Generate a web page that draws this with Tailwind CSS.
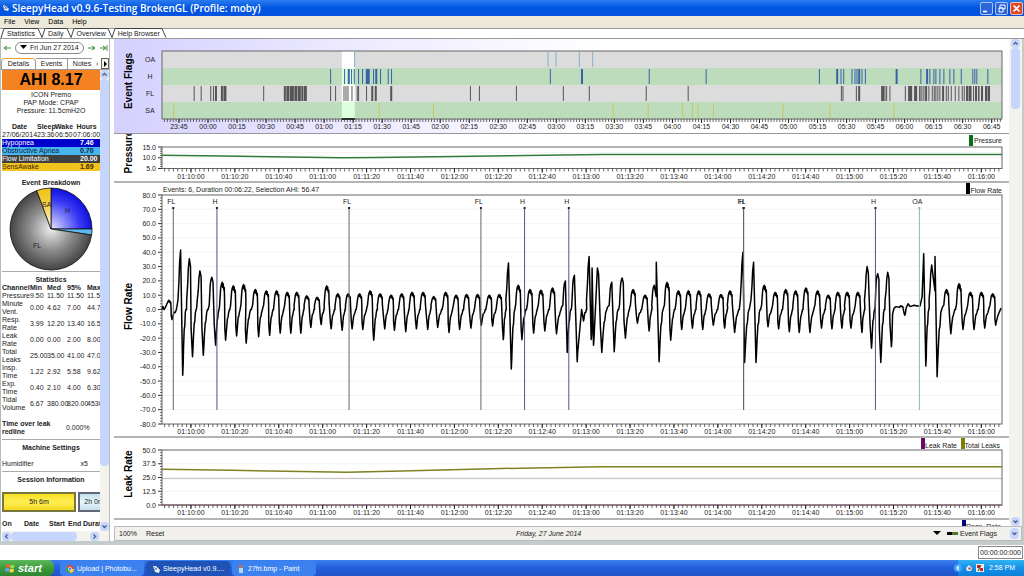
<!DOCTYPE html>
<html lang="en">

<head>
  <meta charset="UTF-8" />
  <meta name="viewport" content="width=device-width, initial-scale=1.0" />
  <title>SleepyHead v0.9.6-Testing BrokenGL (Profile: moby)</title>
  <script src="https://cdn.jsdelivr.net/npm/@tailwindcss/browser@4"></script>
</head>

<body class="flex h-screen flex-col overflow-hidden bg-white font-['Liberation_Sans',Arial,sans-serif] text-[7px] leading-[8px] text-[#222]">

  <!-- Title bar -->
  <header class="flex h-4 shrink-0 items-center bg-linear-to-b from-[#2a7cf0] via-[#0054e3] to-[#0553e0] pr-px pl-[2px] text-white">
    <svg class="h-2 w-2" viewBox="0 0 8 8"><path d="M1 1l3 1 3 3-1 2-4-1z" fill="#e8eef8" /><path d="M2 2l3 3M5 3L2 5" stroke="#567" stroke-width=".7" /></svg>
    <h1 class="ml-[2px] flex-1 truncate font-['Open_Sans',sans-serif] text-[10px] leading-[14px] font-semibold">SleepyHead v0.9.6-Testing BrokenGL (Profile: moby)</h1>
    <div class="flex gap-[2px]">
      <button aria-label="Minimize" class="h-[13px] w-[13px] rounded-[2px] border border-[#a9c4f5] bg-[#2f63d8]">
        <svg viewBox="0 0 11 11"><path d="M2 8.500h4" stroke="#fff" stroke-width="1.600" /></svg>
      </button>
      <button aria-label="Restore" class="h-[13px] w-[13px] rounded-[2px] border border-[#a9c4f5] bg-[#2f63d8]">
        <svg viewBox="0 0 11 11" fill="none" stroke="#fff"><path d="M4 4V2h5v4H7M3 5h4v4H3zM3 5h4" /></svg>
      </button>
      <button aria-label="Close" class="h-[13px] w-[13px] rounded-[2px] border border-[#f0c0b0] bg-[#dc4a26]">
        <svg viewBox="0 0 11 11"><path d="M2.500 2.500l6 6M8.500 2.500l-6 6" stroke="#fff" stroke-width="1.600" /></svg>
      </button>
    </div>
  </header>

  <!-- Menu -->
  <nav class="flex h-3 shrink-0 items-center gap-[9px] bg-[#ece9d8] px-1 text-black">
    <button>File</button>
    <button>View</button>
    <button>Data</button>
    <button>Help</button>
  </nav>

  <!-- Page tabs -->
  <div class="flex h-[11px] shrink-0 items-end border-t border-b border-[#999] bg-white text-[#222]">
    <svg class="h-[10px] w-[7px]" viewBox="0 0 7 10"><path d="M1 10L4 .500h3" fill="none" stroke="#444" /></svg>
    <button class="h-[10px] border-t border-[#444]">Statistics</button>
    <svg class="h-[10px] w-[13px]" viewBox="0 0 13 10"><path d="M0 .500h3l4 9 3-9h3" fill="none" stroke="#444" /></svg>
    <button class="h-[10px] border-t border-[#444]">Daily</button>
    <svg class="h-[10px] w-[13px]" viewBox="0 0 13 10"><path d="M0 .500h3l4 9 3-9h3" fill="none" stroke="#444" /></svg>
    <button class="h-[10px] border-t border-[#444]">Overview</button>
    <svg class="h-[10px] w-3" viewBox="0 0 12 10"><path d="M0 .500h2l4 9 3-9h3" fill="none" stroke="#444" /></svg>
    <button class="h-[10px] border-t border-[#444]">Help Browser</button>
    <svg class="h-[10px] w-[7px]" viewBox="0 0 7 10"><path d="M0 .500h2l4 9" fill="none" stroke="#444" /></svg>
  </div>

  <main class="flex min-h-0 flex-1 border-b-4 border-[#c3cccb]">

    <!-- Daily sidebar -->
    <aside class="flex w-[110px] shrink-0 flex-col border-x border-[#b4bcbc] bg-white">
      <div class="flex h-[17px] shrink-0 items-center gap-1 px-[2px]">
        <button aria-label="Previous day"><svg class="h-2 w-2" viewBox="0 0 8 8"><path d="M8 4H1M4 2L1 4l3 2" fill="none" stroke="#3c8a3c" /></svg></button>
        <button class="flex h-3 w-[70px] items-center gap-[3px] rounded-full border border-[#888] px-1 whitespace-nowrap"><svg class="h-[5px] w-[7px] shrink-0" viewBox="0 0 7 5"><path d="M0 0h7L3.500 4z" /></svg>Fri Jun 27 2014</button>
        <button aria-label="Next day"><svg class="h-2 w-2" viewBox="0 0 8 8"><path d="M0 4h7M4 2l3 2-3 2" fill="none" stroke="#3c8a3c" /></svg></button>
        <button aria-label="Latest day"><svg class="h-2 w-2" viewBox="0 0 8 8"><path d="M0 4h6M3 2l3 2-3 2M7 1v6" fill="none" stroke="#3c8a3c" /></svg></button>
      </div>
      <div class="flex h-[14px] shrink-0 items-stretch border-b border-[#999] pt-[2px]">
        <button class="w-[35px] rounded-t-sm border border-b-0 border-[#999] border-t-[#f0a020]">Details</button>
        <button class="w-8 border-t border-r border-[#999]">Events</button>
        <button class="w-6 border-t border-[#999] pl-1">Notes</button>
        <span class="flex flex-1 items-center justify-center"><svg class="h-1 w-1" viewBox="0 0 4 4"><path d="M3 0v4L1 2z" fill="#999" /></svg></span>
        <button aria-label="Scroll tabs" class="w-2 border border-[#666] bg-[#f4f2e8]"><svg class="h-2 w-[6px]" viewBox="0 0 6 8"><path d="M2 1l3 3-3 3z" /></svg></button>
      </div>

      <div class="flex min-h-0 flex-1">
        <div class="flex min-w-0 flex-1 flex-col overflow-hidden pl-px">
          <div class="min-h-0 flex-1 overflow-hidden">
            <h2 class="bg-[#f58220] text-center text-base leading-5 font-bold text-black">AHI 8.17</h2>
            <p class="pt-px text-center">ICON Premo<br>PAP Mode: CPAP<br>Pressure: 11.5cmH2O</p>

            <table class="mt-2 w-full table-fixed whitespace-nowrap">
              <thead>
                <tr><th class="w-[35px]">Date</th><th class="w-[18px]">Sleep</th><th class="w-[18px]">Wake</th><th>Hours</th></tr>
              </thead>
              <tbody>
                <tr><td>27/06/2014</td><td>23:36</td><td>06:50</td><td>07:06:00</td></tr>
              </tbody>
            </table>
            <table class="w-full">
              <tr class="bg-[#0000cc] text-white"><td>Hypopnea</td><td class="w-5 font-bold">7.46</td></tr>
              <tr class="bg-[#45b5ec] text-[#124]"><td>Obstructive Apnea</td><td class="font-bold">0.70</td></tr>
              <tr class="bg-[#404040] text-white"><td>Flow Limitation</td><td class="font-bold">20.00</td></tr>
              <tr class="bg-[#f0c41c] text-[#420]"><td>SensAwake</td><td class="font-bold">1.69</td></tr>
            </table>

            <h3 class="mt-2 text-center font-bold">Event Breakdown</h3>
            <svg class="mx-auto h-[84px] w-[96px]" viewBox="2 0 96 84" stroke="#111" stroke-width=".8">
              <defs>
                <radialGradient id="gH" gradientUnits="userSpaceOnUse" cx="50" cy="42" r="41"><stop stop-color="#e4e4ff" /><stop offset=".7" stop-color="#3a3af4" /><stop offset="1" stop-color="#1010e0" /></radialGradient>
                <radialGradient id="gF" gradientUnits="userSpaceOnUse" cx="50" cy="42" r="41"><stop stop-color="#eee" /><stop offset=".5" stop-color="#909090" /><stop offset="1" stop-color="#444" /></radialGradient>
                <radialGradient id="gS" gradientUnits="userSpaceOnUse" cx="50" cy="42" r="41"><stop stop-color="#fff" /><stop offset=".6" stop-color="#f2d040" /><stop offset="1" stop-color="#eec41c" /></radialGradient>
              </defs>
              <path d="M50 42V1A41 41 0 0 1 91 42z" fill="url(#gH)" />
              <path d="M50 42H91A41 41 0 0 1 90.600 48z" fill="#5cb8ee" />
              <path d="M50 42L90.600 48A41 41 0 1 1 35.700 3.600z" fill="url(#gF)" />
              <path d="M50 42L35.700 3.600A41 41 0 0 1 50 1z" fill="url(#gS)" />
              <g fill="#222" stroke="none" font-size="7"><text x="64" y="26">H</text><text x="32" y="61">FL</text><text x="41" y="20">SA</text></g>
            </svg>

            <h3 class="border-t border-[#aaa] pt-1 text-center font-bold">Statistics</h3>
            <table class="w-[106px] table-fixed text-left whitespace-nowrap">
              <thead>
                <tr><th class="w-[28px]">Channel</th><th class="w-[17px]">Min</th><th class="w-5">Med</th><th class="w-5">95%</th><th>Max</th></tr>
              </thead>
              <tbody>
                <tr><td>Pressure</td><td>9.50</td><td>11.50</td><td>11.50</td><td>11.50</td></tr>
                <tr><td>Minute<br>Vent.</td><td>0.00</td><td>4.62</td><td>7.00</td><td>44.75</td></tr>
                <tr><td>Resp.<br>Rate</td><td>3.99</td><td>12.20</td><td>13.40</td><td>16.58</td></tr>
                <tr><td>Leak<br>Rate</td><td>0.00</td><td>0.00</td><td>2.00</td><td>8.00</td></tr>
                <tr><td>Total<br>Leaks</td><td>25.00</td><td>35.00</td><td>41.00</td><td>47.00</td></tr>
                <tr><td>Insp.<br>Time</td><td>1.22</td><td>2.92</td><td>5.58</td><td>9.62</td></tr>
                <tr><td>Exp.<br>Time</td><td>0.40</td><td>2.10</td><td>4.00</td><td>6.30</td></tr>
                <tr><td>Tidal<br>Volume</td><td>6.67</td><td>380.00</td><td>820.00</td><td>4530</td></tr>
              </tbody>
            </table>

            <div class="mt-2 flex items-center pb-[3px]"><b class="w-16">Time over leak<br>redline</b><span>0.000%</span></div>
            <h3 class="border-t border-[#aaa] pt-1 text-center font-bold">Machine Settings</h3>
            <div class="mt-2 flex justify-between pr-3 pb-[3px]"><span>Humidifier</span><span>x5</span></div>
            <h3 class="border-t border-[#aaa] pt-1 text-center font-bold">Session Information</h3>
            <div class="mt-2 flex h-5 w-[120px] gap-[2px]">
              <button class="w-[74px] shrink-0 border-2 border-[#77763c] bg-linear-to-b from-[#f8e020] via-[#ffee50] to-[#f4d818]">5h 6m</button>
              <button class="w-8 border-2 border-[#667] bg-linear-to-b from-[#c2e0ee] via-[#e8f6fc] to-[#c2e0ee] whitespace-nowrap">2h 0m</button>
            </div>
            <div class="mt-2 flex w-[120px] font-bold whitespace-nowrap"><span class="w-[22px]">On</span><span class="w-[25px]">Date</span><span class="w-[19px]">Start</span><span class="w-[15px]">End</span><span>Duration</span></div>
          </div>
          <!-- horizontal scrollbar -->
          <div class="flex h-[10px] shrink-0 items-center bg-[#f3f2ec]">
            <button aria-label="Scroll left" class="h-[9px] w-[9px] rounded-sm bg-[#c5d5fc]"><svg viewBox="0 0 9 9"><path d="M5.500 2.500l-2 2 2 2" fill="none" stroke="#4d6185" stroke-width="1.300" /></svg></button>
            <span class="h-[9px] w-[66px] rounded-sm bg-[#c5d5fc]"></span>
            <span class="flex-1"></span>
            <button aria-label="Scroll right" class="mr-px h-[9px] w-[9px] rounded-sm bg-[#c5d5fc]"><svg viewBox="0 0 9 9"><path d="M3.500 2.500l2 2-2 2" fill="none" stroke="#4d6185" stroke-width="1.300" /></svg></button>
          </div>
        </div>
        <!-- vertical scrollbar -->
        <div class="flex w-[9px] shrink-0 flex-col bg-[#f3f2ec] pb-[10px]">
          <button aria-label="Scroll up" class="h-[9px] rounded-sm bg-[#c5d5fc]"><svg viewBox="0 0 9 9"><path d="M2.500 5.500l2-2 2 2" fill="none" stroke="#4d6185" stroke-width="1.300" /></svg></button>
          <span class="h-[84%] rounded-sm bg-[#c5d5fc]"></span>
          <span class="flex-1"></span>
          <button aria-label="Scroll down" class="h-[9px] rounded-sm bg-[#c5d5fc]"><svg viewBox="0 0 9 9"><path d="M2.500 3.500l2 2 2-2" fill="none" stroke="#4d6185" stroke-width="1.300" /></svg></button>
        </div>
      </div>
    </aside>

    <!-- Graphs -->
    <section class="ml-1 flex min-w-0 flex-1 flex-col">
      <div class="flex min-h-0 flex-1">
        <div class="flex min-w-0 flex-1 flex-col">
          <svg id="flags" class="block h-[95px] w-full shrink-0 border-b border-[#999] bg-linear-to-r from-[#d4d0ff] via-[#ece9ff] via-25% to-white to-55%"></svg>
          <svg id="pressure" class="block h-[49px] w-full shrink-0 border-b-2 border-[#b4b4b4]"></svg>
          <svg id="flow" class="block min-h-0 w-full flex-1 border-b-2 border-[#b4b4b4]"></svg>
          <svg id="leak" class="block h-[82px] w-full shrink-0 border-b-2 border-[#b4b4b4]"></svg>
          <svg id="resp" class="block h-[6px] w-full shrink-0"></svg>
        </div>
        <div class="flex w-[13px] shrink-0 flex-col bg-[#f3f2ec] px-[2px]">
          <button aria-label="Scroll up" class="h-[9px] rounded-sm bg-[#c5d5fc]"><svg viewBox="0 0 9 9"><path d="M2.500 5.500l2-2 2 2" fill="none" stroke="#4d6185" stroke-width="1.300" /></svg></button>
          <span class="h-[61px] rounded-sm bg-[#c5d5fc]"></span>
          <span class="flex-1"></span>
          <button aria-label="Scroll down" class="h-[9px] rounded-sm bg-[#c5d5fc]"><svg viewBox="0 0 9 9"><path d="M2.500 3.500l2 2 2-2" fill="none" stroke="#4d6185" stroke-width="1.300" /></svg></button>
        </div>
      </div>

      <div class="flex h-[15px] shrink-0 items-center border border-[#bbb] bg-[#f1f0ec] pl-1">
        <button class="w-[27px] text-left">100%</button>
        <button>Reset</button>
        <span class="flex-1 text-center italic">Friday, 27 June 2014</span>
        <svg class="mr-[6px] h-[5px] w-2" viewBox="0 0 8 5"><path d="M0 0h8L4 4z" /></svg>
        <svg class="mr-[2px] h-[3px] w-[11px]" viewBox="0 0 11 3"><path d="M0 0h5v3H0z" /><path d="M5 0h6v3H5z" fill="#4c7a2c" /></svg>
        <select aria-label="Graphs" class="w-[50px] appearance-none"><option>Event Flags</option></select>
        <span class="mr-[2px] h-[11px] w-[9px] rounded-sm bg-[#c5d5fc]"><svg viewBox="0 0 9 11"><path d="M2.500 4.500l2 2 2-2" fill="none" stroke="#4d6185" stroke-width="1.300" /></svg></span>
      </div>
    </section>
    <div class="w-[2px] bg-[#c3cccb]"></div>
  </main>

  <!-- Status bar -->
  <div class="flex h-[15px] shrink-0 justify-end bg-white pr-px">
    <input aria-label="Position" value="00:00:00:000" class="my-px w-[45px] border border-[#888] text-center text-[7px]" />
  </div>

  <!-- Taskbar -->
  <footer class="flex h-4 shrink-0 items-stretch bg-linear-to-b from-[#3a80f0] via-[#245edb] to-[#1f52c8] text-white">
    <button class="mr-[6px] flex w-[54px] items-center gap-[3px] rounded-r-md bg-linear-to-b from-[#5cb85c] via-[#3a9a3a] to-[#2f852f] pl-[5px] text-[11px] leading-3 font-bold italic">
      <svg class="h-[10px] w-[10px]" viewBox="0 0 10 10"><path d="M1 1.500q2-1 4 0L4.500 4.800q-2-1-4 0z" fill="#f0603a" /><path d="M5.600 1.800q2 .8 4 0L9 5q-2 .8-4 0z" fill="#a0d848" /><path d="M.4 5.400q2-1 4 0L4 8.700q-2-1-4 0z" fill="#68a0f8" /><path d="M5 5.700q2 .8 4 0L8.500 9q-2 .8-4 0z" fill="#fcd440" /></svg>start
    </button>
    <button class="mt-px mr-[2px] flex w-[84px] items-center gap-[3px] rounded-sm bg-[#3c81f0] pl-[6px]">
      <svg class="h-2 w-2" viewBox="0 0 8 8"><circle cx="4" cy="4" r="4" fill="#e0483c" /><path d="M4 4L.5 2A4 4 0 0 0 4 8z" fill="#3ca850" /><path d="M4 4h4a4 4 0 0 1-4 4z" fill="#f8cc30" /><circle cx="4" cy="4" r="1.700" fill="#4a88f0" stroke="#fff" stroke-width=".6" /></svg>Upload | Photobu...
    </button>
    <button class="mt-px mr-[2px] flex w-[84px] items-center gap-[3px] rounded-sm bg-[#1e52b7] pl-[6px]">
      <svg class="h-2 w-2" viewBox="0 0 8 8"><path d="M1 1l3 0 4 4-1 3-4-1z" fill="#e8eef8" /><path d="M2 2l3 3M5 3L2 5" stroke="#567" stroke-width=".7" /></svg>SleepyHead v0.9....
    </button>
    <button class="mt-px flex w-[84px] items-center gap-[3px] rounded-sm bg-[#3c81f0] pl-[5px]">
      <svg class="h-2 w-2" viewBox="0 0 8 8"><path d="M2 3h4v5H2z" fill="#b8d8f0" /><path d="M3 3L2 0M4 3V0M5 3l1-3" stroke="#e07030" /></svg>27fri.bmp - Paint
    </button>
    <span class="flex-1"></span>
    <div class="flex w-[66px] items-center gap-[3px] bg-linear-to-b from-[#30b4f4] via-[#1290e8] to-[#0f80d8]">
      <button aria-label="Show hidden icons" class="-ml-1 h-2 w-2 rounded-full bg-[#3ca4f8]"><svg viewBox="0 0 8 8"><path d="M5 2L3 4l2 2" fill="none" stroke="#fff" stroke-width="1.200" /></svg></button>
      <svg class="h-2 w-2" viewBox="0 0 8 8"><path d="M1 4l3-3 3 3-1 3H2z" fill="#e8eef8" /><circle cx="4.500" cy="4.500" r="1.200" fill="#c44" /></svg>
      <svg class="h-2 w-2" viewBox="0 0 8 8"><path d="M0 0h8v8H0z" fill="#eee" /><path d="M1 1h3v3H1zM4 4h3v3H4z" fill="#c22" /><path d="M5 1L2 7" stroke="#333" /></svg>
      <span class="ml-[2px]">2:58 PM</span>
    </div>
  </footer>

  <script>
    const LEFT = 48, RIGHT = 7, SPAN = 841; // plot margins, and the width the data is measured on

    // breaths: peak position, peak flow, trough position, trough flow
    const breaths = [
      [7, 6.5, 10, -7], [19, 41.5, 20.7, -46], [27.7, 35.5, 30.5, -33], [38.3, 27, 41.3, -32], [50.3, 22.5, 53.7, -25],
      [60.7, 19, 63.7, -21.5], [71.7, 16.5, 74.7, -18.5], [82, 17.5, 84.3, -23.5], [93.7, 14, 96.7, -19], [104.7, 13, 107.7, -18],
      [115, 13, 118.3, -16.5], [125.7, 12, 129, -16.5], [135.3, 12, 139, -16.5], [145.3, 9.5, 149, -12.5], [155.7, 8.5, 159.3, -10.5],
      [165.3, 16.5, 169.3, -13.5], [176.3, 11, 180.3, -14.5], [186.7, 11, 190.3, -13.5], [198, 11, 201, -14], [208.7, 13, 212, -21.5],
      [218.7, 11, 223, -13.5], [229.7, 10, 232.7, -14.5], [240.3, 11, 244, -15.5], [250.7, 12, 254.7, -13.5], [261.7, 12, 266, -14],
      [272.3, 9, 276, -12.5], [284.3, 12, 287.3, -16], [294.7, 10, 298, -14], [305.3, 10.5, 309.3, -13], [316.3, 10.5, 319.7, -11],
      [328, 10, 331, -11.5], [338, 10.5, 341.7, -21], [347.3, 32.5, 349.7, -41.5], [357, 17, 360.3, -21], [368.7, 14, 372, -16.5],
      [379.7, 13.5, 383.3, -15], [391.3, 15, 395, -17], [404.3, 20, 405.7, -30], [413.3, 24, 415.7, -36.5], [420.5, 0, 422, -8],
      [428, 37, 429.7, -21], [431, 29, 432, -25], [436.3, 29, 440.3, -30], [450.7, 19, 452.7, -29.5], [461, 22, 464, -20],
      [472, 14, 476, -9.5], [484, 10, 487.7, -15], [493.3, 17, 494.3, 11], [495.3, 33, 497.7, -36.5], [506, 19, 509.3, -21.5],
      [517.3, 13, 520.3, -14], [527.3, 13, 531, -13], [537.7, 13, 541.3, -14], [548, 11, 552, -11], [560, 10.5, 563.3, -13],
      [569, 13, 573.3, -16], [582, 40, 583.3, -37], [592.7, 33, 594.7, -37], [603.3, 17, 606.7, -12], [614.3, 12, 617.3, -13.5],
      [624.7, 14, 628, -15.5], [634.7, 13, 638, -16], [645, 15, 648.7, -16], [656.7, 13, 660.3, -13], [667.3, 10, 670.7, -13.5],
      [677, 12, 680.7, -13], [686.3, 12, 689.7, -13], [697, 12, 700.7, -16], [706.3, 30, 710.3, -27], [717, 25, 719.7, -37],
      [727, 26, 730.3, -26], [740, 2.5, 743.7, -4], [763, 39, 764.7, -39.5], [771, 31, 773.3, 16], [774.3, 37, 776, -47],
      [785.7, 14, 789.7, -17], [798.3, 18, 802, -14], [809.7, 12, 813, -14], [820.7, 12, 823.7, -13], [832, 11, 834.7, -11]
    ];

    // event rows: single marks, or [from, width] for a solid run
    const rows = [
      { name: 'OA', bg: '#dcdcdc', color: '#7fb4c8', marks: [192.3, 386, 394, 417.3, 430.7] },
      { name: 'H', bg: '#bcdcbc', color: '#3a62a8', marks: [168.3, 182.3, [186, 2], 189.3, 192, 196.3, 200.3, [204, 4], 211.3, [213.5, 2], 218.3, 226, 229.3, 388.3, [419.5, 2], 487.3, 544.3,
        657.7, [675, 2], 679.3, 682, 690.3, 693.3, 695.3, [697, 2], 700.3, 703.7, [734.5, 2], 759.3, [765, 2], 768.3, 772.3, 774.3, 778.3, 782.3, 788.3, 792.3, 799.7, 811.3, 813.3, 815.3, 826.3] },
      { name: 'FL', bg: '#dcdcdc', color: '#555', marks: [31.7, 38.7, 48.3, 51, [53, 2], [59, 2], [61.5, 3], 101.3, [122, 2], [124.5, 3], [128, 4], [132.5, 3], [136, 3], [139.5, 2], [142, 3], 168.3, 173.3, 181.7, 183.7, 185.7, 189.7, 195, 196.3, 204.3,
        [209.5, 2], [213, 2], [228.5, 2], 308.3, 317.3, 354.3, 401.3, 427.3, 484.3, 526.3, 679.7, 681.3, 694.7, [697, 2], [720, 3], 723.3, 725, 728.3, 743.7, [747, 4], [753, 3], [758, 1.5], 760.3, 762.3, [764, 2], 767.3,
        770.7, 772.7, 774.3, 776.3, 778.3, [781, 2], 784.7, 786.7, 789.7, 793.7, 797.3, 800.7, 802.7, [805, 2], [807.5, 3], 812, [814, 2], [817, 1.5], [820, 2], [824, 2], [826.5, 2.5]] },
      { name: 'SA', bg: '#bcdcbc', color: '#c8c860', marks: [11.3, 217, 271.3, 451.3, 486.3, 520.7, 530.7, 536.3, 551.7, 621.3, 668.3, 732.3] }
    ];

    const flowEvents = [[11.3, 'FL'], [55, 'H'], [187.3, 'FL'], [319.3, 'FL'], [363, 'H'], [407.3, 'H'], [582.3, 'H'], [582.3, 'FL'], [714.3, 'H'], [758.3, 'OA']];

    const pad = n => String(n).padStart(2, '0');
    const line = (x1, y1, x2, y2, c, w = 1) => `<line x1="${x1}" y1="${y1}" x2="${x2}" y2="${y2}" stroke="${c}" stroke-width="${w}"/>`;
    const rect = (x, y, w, h, c) => `<rect x="${x}" y="${y}" width="${w}" height="${h}" fill="${c}"/>`;
    const text = (x, y, s, anchor = 'middle') => `<text x="${x}" y="${y}" font-size="7" fill="#222" text-anchor="${anchor}">${s}</text>`;
    const title = (y, s) => `<text transform="translate(18 ${y}) rotate(-90)" font-size="10" font-weight="bold" text-anchor="middle">${s}</text>`;

    function timeAxis(y, w, first, step, count, label) {
      const k = w / SPAN;
      let out = '';
      for (let p = first - Math.floor(first / step * 10) * step / 10; p < SPAN; p += step / 10) out += line(LEFT + p * k, y, LEFT + p * k, y + 3, '#444', .8);
      for (let i = 0; i < count; i++) {
        const x = LEFT + (first + i * step) * k;
        out += line(x, y, x, y + 4, '#222') + text(x, y + 10, label(i));
      }
      return out;
    }
    const clock = i => { const s = 4200 + i * 20; return `${pad(Math.floor(s / 3600))}:${pad(Math.floor(s / 60) % 60)}:${pad(s % 60)}`; };
    const nightClock = i => { const m = (1425 + i * 15) % 1440; return `${pad(Math.floor(m / 60))}:${pad(m % 60)}`; };

    function valueAxis(top, bottom, min, max, step, minor) {
      const n = Math.round((max - min) / step), gap = (bottom - top) / n;
      let out = '';
      for (let i = 0; i <= n; i++) {
        const y = bottom - i * gap;
        out += line(LEFT - 4, y, LEFT, y, '#333') + text(LEFT - 6, y + 2.5, (min + i * step).toFixed(1), 'end');
        for (let j = 1; j < minor && i < n; j++) out += line(LEFT - 2, y - j * gap / minor, LEFT, y - j * gap / minor, '#444', .8);
      }
      return out;
    }
    function grid(top, bottom, w, n) {
      let out = '';
      for (let i = 1; i < n; i++) out += line(LEFT, top + i * (bottom - top) / n, LEFT + w, top + i * (bottom - top) / n, '#f4f4f4');
      return out;
    }
    const frame = (top, bottom, w) => `<rect x="${LEFT}" y="${top}" width="${w}" height="${bottom - top}" fill="none" stroke="#666"/>`;
    const curve = (pts, k, toY, c, sw) => `<polyline points="${pts.map(([p, v]) => (LEFT + p * k).toFixed(1) + ',' + toY(v).toFixed(1)).join(' ')}" fill="none" stroke="${c}" stroke-width="${sw}" stroke-linejoin="round"/>`;

    // each breath: slow recovery to zero, steep rise, short plateau, steep fall
    function flowPoints() {
      const pts = [[0, 0], [1, 2], [2, 0], [3, 1]];
      let px = 3, pv = 0;
      breaths.forEach(([x, v, tx, tv], i) => {
        const gap = x - px;
        if (px === 730.3) pts.push([731.500, -3], [733, 1], [735, 2], [738, 1.5]);
        else if (px === 743.7) pts.push([745, 1], [747, 4], [749, 2], [753, 3], [756, 2.5], [759, 2.5], [761, 9]);
        else if (gap > 5) {
          pts.push([px + gap * .12, pv * .6], [px + gap * .22, pv * .3], [px + gap * .3, pv * .25], [px + gap * .38, -2], [px + gap * .48, 0], [px + gap * .54, i % 2 ? 1.5 : 0], [x - 3, v > 25 ? 7 : 3], [x - 2, v > 25 ? v * .5 : v * .75], [x - 1.4, v > 25 ? v * .8 : v * .9]);
        }
        pts.push([x - .4, v]);
        if (v < 20 && tx - x > 2) pts.push([x, v * .82], [x + .6, v * .95], [x + 1.2, v * .72], [x + 1.7, v * .8], [x + 2, v * .3], [tx - .8, tv * .6]);
        else if (tx - x > 2.5) pts.push([x + .8, v * .85], [tx - 1.4, tv * .4]);
        pts.push([tx, tv], [tx + .5, tv * .82]);
        px = tx; pv = tv;
      });
      pts.push([837, -4], [840, 1]);
      return pts;
    }

    function draw() {
      const el = id => document.getElementById(id);
      const full = el('flow').clientWidth, w = full - LEFT - RIGHT, k = w / SPAN, end = LEFT + w;

      // event flags
      let s = title(42, 'Event Flags');
      rows.forEach((r, i) => {
        const y = 12 + i * 17;
        s += rect(LEFT, y, w, 17, r.bg);
        s += rect(LEFT + 180 * k, y, 13 * k, 17, i % 2 ? '#dcffdc' : '#fff');
        r.marks.forEach(m => { const [p, mw] = Array.isArray(m) ? m : [m, 1]; s += rect(LEFT + p * k, y + 1, mw, 15, r.color); });
        s += text(36, y + 11, r.name);
      });
      s += frame(12, 80, w) + line(LEFT + 180 * k, 80, LEFT + 193 * k, 80, '#000', 1.5) + timeAxis(80, w, 17, 29.06, 29, nightClock);
      el('flags').innerHTML = s;

      // pressure
      const py = v => 34.5 - (v - 5) * 2.15;
      el('pressure').innerHTML = title(18, 'Pressure') + grid(13, 34.5, w, 4) + frame(13, 34.5, w) + valueAxis(13, 34.5, 5, 15, 5, 5) +
        timeAxis(34.5, w, 29, 43.96, 19, clock) + curve([[0, 11.2], [60, 10.8], [180, 10], [215, 10.1], [330, 10.8], [440, 11.5], [SPAN, 11.5]], k, py, '#2e7d3e', 1.5) +
        rect(end - 33, 1, 4, 11, '#0a6e14') + text(end, 9, 'Pressure', 'end');

      // flow rate
      const fh = el('flow').clientHeight, top = 12, bottom = fh - 12;
      const fy = v => (top + bottom) / 2 - v * (bottom - top) / 160;
      s = title((top + bottom) / 2 - 3, 'Flow Rate') + grid(top, bottom, w, 16) + frame(top, bottom, w) + valueAxis(top, bottom, -80, 80, 10, 5);
      s += timeAxis(bottom, w, 29, 43.96, 19, clock) + text(LEFT + 1, 9, 'Events: 6, Duration 00:06:22, Selection AHI: 56.47', 'start');
      s += curve(flowPoints(), k, fy, '#000', 1.5);
      flowEvents.forEach(([p, name]) => {
        const x = LEFT + p * k, c = name === 'OA' ? '#7cc0b8' : name === 'H' ? '#55557f' : '#666';
        s += line(x, top + 13, x, bottom - 14, c) + rect(x - 1, top + 12, 2, 2, name === 'OA' ? c : '#223') + text(x - 2, top + 9, name);
      });
      s += rect(end - 36, 0, 4, 11, '#000') + text(end, 10, 'Flow Rate', 'end');
      el('flow').innerHTML = s;

      // leak rate
      const ly = v => 67 - v * 1.1;
      el('leak').innerHTML = title(36, 'Leak Rate') + grid(12, 67, w, 4) + line(LEFT, ly(24), end, ly(24), '#c4c0bc') + frame(12, 67, w) + valueAxis(12, 67, 0, 50, 12.5, 5) +
        line(LEFT, 67, end, 67, '#7a4a60') + timeAxis(67, w, 29, 43.96, 19, clock) + curve([[0, 32.5], [70, 31.5], [185, 29.8], [240, 31], [330, 33], [440, 34.8], [SPAN, 34.8]], k, ly, '#7f8020', 1.5) +
        rect(end - 81, 0, 4, 11, '#6a0a70') + text(end - 45, 10, 'Leak Rate', 'end') + rect(end - 41, 0, 4, 11, '#808000') + text(end - 2, 10, 'Total Leaks', 'end');

      el('resp').innerHTML = rect(end - 40, 0, 4, 6, '#000080') + text(end - 1, 9, 'Resp. Rate', 'end');
    }
    // redraw whenever the graph area gets a new size
    new ResizeObserver(draw).observe(document.getElementById('flow'));
  </script>
</body>

</html>
